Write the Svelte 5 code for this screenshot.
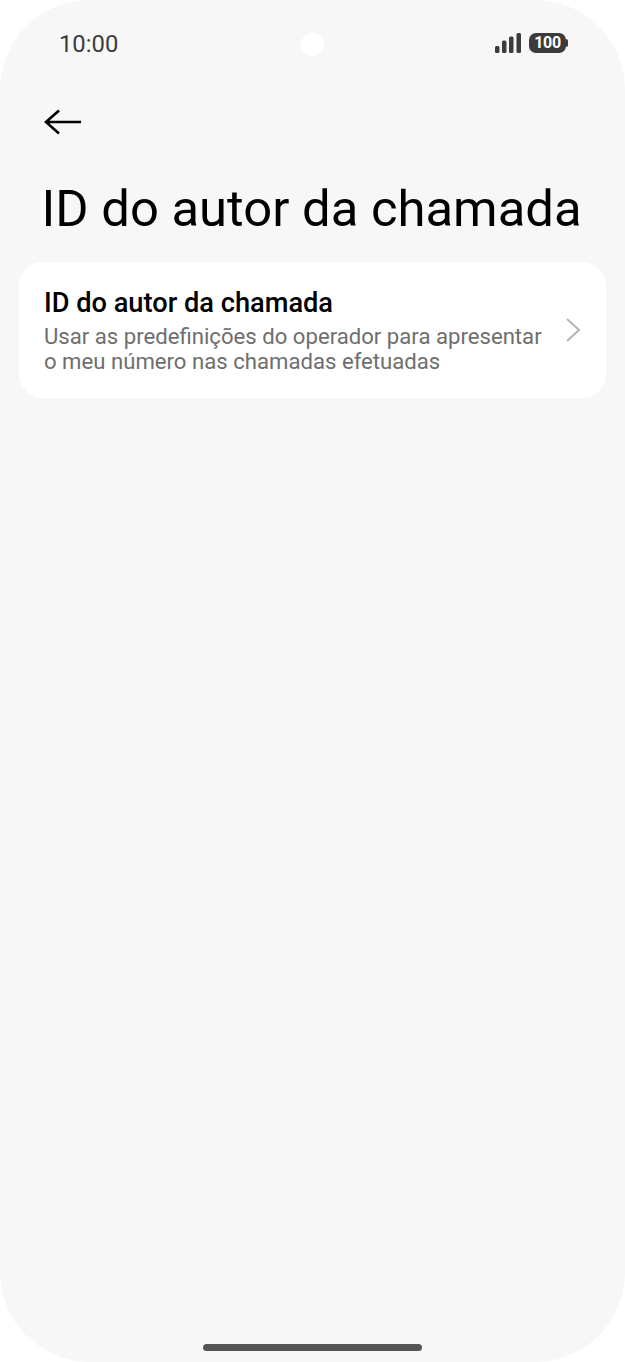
<script>
    const title = 'ID do autor da chamada';
    const summary = 'Usar as predefinições do operador para apresentar o meu número nas chamadas efetuadas';
</script>

<div class="phone">
    <div class="statusBar">
        <span class="time">10:00</span>
        <span class="camera"></span>
        <div class="statusIcons">
            <svg width="26" height="20" viewBox="0 0 26 20">
                <rect x="0" y="13" width="4.5" height="7" rx="1.5" fill="#3c3c3c" />
                <rect x="7" y="7.5" width="4.5" height="12.5" rx="1.5" fill="#3c3c3c" />
                <rect x="14" y="3.5" width="4.5" height="16.5" rx="1.5" fill="#3c3c3c" />
                <rect x="21.5" y="0" width="4.5" height="20" rx="1.5" fill="#3c3c3c" />
            </svg>
            <div class="battery"><span>100</span></div>
        </div>
    </div>

    <button class="back" type="button" aria-label="Voltar">
        <svg width="38" height="26" viewBox="0 0 38 26">
            <path d="M15 1.5 L2 13 L15 24.5 M2 13 H37" fill="none" stroke="#000" stroke-width="2.6" />
        </svg>
    </button>

    <h1>{title}</h1>

    <div class="card">
        <div class="cardText">
            <div class="cardTitle">{title}</div>
            <div class="cardSummary">{summary}</div>
        </div>
        <svg class="chevron" width="16" height="26" viewBox="0 0 16 26">
            <path d="M2 2 L14 13 L2 24" fill="none" stroke="#b4b4b4" stroke-width="2" />
        </svg>
    </div>

    <div class="homeBar"></div>
</div>

<style>
    :global(body) {
        background-color: #fff;
    }

    .phone {
        width: 625px;
        height: 1362px;
        box-sizing: border-box;
        border-radius: 90px;
        background-color: #f7f7f7;
        font-family: Roboto, sans-serif;
        display: flex;
        flex-direction: column;
        overflow: hidden;
    }

    .statusBar {
        display: grid;
        grid-template-columns: 1fr 23px 1fr;
        align-items: center;
        height: 24px;
        margin-top: 31px;
        padding: 0 59px;
    }

    .time {
        font-size: 23.8px;
        line-height: 26px;
        color: #3c3c3c;
    }

    .camera {
        width: 23px;
        height: 23px;
        border-radius: 50%;
        background-color: #fff;
    }

    .statusIcons {
        display: flex;
        align-items: center;
        justify-content: flex-end;
        gap: 8px;
        margin-bottom: 2px;
    }

    .battery {
        position: relative;
        width: 37px;
        height: 20px;
        border-radius: 7px;
        background-color: #3c3c3c;
        color: #fff;
        font-size: 16px;
        font-weight: 700;
        line-height: 20px;
        letter-spacing: -0.4px;
        text-align: center;
    }

    .battery::after {
        content: '';
        position: absolute;
        right: -2px;
        top: 6px;
        width: 2px;
        height: 8px;
        border-radius: 0 2px 2px 0;
        background-color: #3c3c3c;
    }

    .back {
        align-self: flex-start;
        display: flex;
        margin: 54px 0 0 44px;
        padding: 0;
        border: none;
        background: none;
    }

    h1 {
        margin: 44px 0 0 41.5px;
        font-size: 50.8px;
        line-height: 60px;
        font-weight: 400;
        color: #000;
        white-space: nowrap;
    }

    .card {
        display: flex;
        align-items: center;
        justify-content: space-between;
        margin: 23px 19px 0;
        padding: 24px 25px 24px 25px;
        border-radius: 24px;
        background-color: #fff;
    }

    .cardText {
        width: 505px;
    }

    .cardTitle {
        font-size: 27.2px;
        line-height: 34px;
        font-weight: 500;
        color: #000;
    }

    .cardSummary {
        margin-top: 4px;
        font-size: 22.15px;
        line-height: 25px;
        color: #6e6e6e;
    }

    .homeBar {
        width: 219px;
        height: 7px;
        margin: auto auto 11px;
        border-radius: 4px;
        background-color: #555;
    }
</style>
